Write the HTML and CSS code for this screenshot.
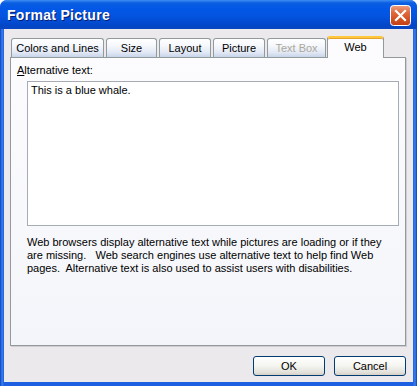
FILE: index.html
```html
<!DOCTYPE html>
<html lang="en">

<head>
    <meta charset="UTF-8">
    <meta name="viewport" content="width=device-width, initial-scale=1.0">
    <title>Format Picture</title>
    <link rel="stylesheet" href="styles.css">
</head>

<body>
    <div class="window">
        <div class="titlebar">
            <span class="title">Format Picture</span>
            <svg class="close" width="21" height="21" viewBox="0 0 21 21">
                <defs>
                    <linearGradient id="closeFill" x1="0" y1="0" x2="0" y2="1">
                        <stop offset="0" stop-color="#eba083" />
                        <stop offset="0.35" stop-color="#e06a3e" />
                        <stop offset="0.7" stop-color="#d2501f" />
                        <stop offset="1" stop-color="#c0401a" />
                    </linearGradient>
                </defs>
                <rect x="0.5" y="0.5" width="20" height="20" rx="3" fill="url(#closeFill)" stroke="#ffffff" />
                <path d="M6 6 L15 15 M15 6 L6 15" stroke="#ffffff" stroke-width="2.2" stroke-linecap="square" />
            </svg>
        </div>

        <div class="dialog">
            <div class="tabs">
                <div class="tab tab-colors">Colors and Lines</div>
                <div class="tab tab-size">Size</div>
                <div class="tab tab-layout">Layout</div>
                <div class="tab tab-picture">Picture</div>
                <div class="tab tab-textbox disabled">Text Box</div>
                <div class="tab tab-web active">Web</div>
            </div>

            <div class="panel">
                <label class="field-label" for="altText"><u>A</u>lternative text:</label>
                <textarea id="altText" class="alt-text">This is a blue whale.</textarea>
                <p class="help">Web browsers display alternative text while pictures are loading or if they<br>are missing.   Web search engines use alternative text to help find Web<br>pages.  Alternative text is also used to assist users with disabilities.</p>
            </div>

            <div class="buttons">
                <button class="btn">OK</button>
                <button class="btn">Cancel</button>
            </div>
        </div>
    </div>
</body>

</html>
```

FILE: styles.css
```css
body {
    margin: 0;
    padding: 0;
    background: #ffffff;
    font-family: "Liberation Sans", Arial, sans-serif;
    font-size: 11px;
    color: #000000;
}

.window {
    width: 417px;
    height: 386px;
    box-sizing: border-box;
    border-radius: 7px 7px 0 0;
    padding: 0 4px 4px 4px;
    display: flex;
    flex-direction: column;
    background: linear-gradient(to right, #0a3fb8 0, #3a80f0 2px, #1c5fe0 4px, #1c5fe0 413px, #3a80f0 415px, #0a3fb8 417px);
}

.titlebar {
    height: 29px;
    margin: 0 -4px;
    padding: 0 6px 0 7px;
    display: flex;
    align-items: center;
    justify-content: space-between;
    border-radius: 7px 7px 0 0;
    background: linear-gradient(to bottom, #3e8df3 0, #0a5ee0 3px, #0358e6 8px, #0354e0 16px, #0247c9 25px, #0a45bf 29px);
}

.title {
    color: #ffffff;
    font-weight: bold;
    font-size: 14px;
    letter-spacing: 0.3px;
    margin-top: 1px;
    text-shadow: 1px 1px 0 #0a1e6e;
}

.close {
    display: block;
    margin-top: 1px;
}

.dialog {
    flex: 1;
    background: #ece9ec;
    padding: 7px 7px 0 6px;
    display: flex;
    flex-direction: column;
}

.tabs {
    display: flex;
    align-items: flex-end;
    height: 22px;
    padding-left: 1px;
    position: relative;
    z-index: 1;
}

.tab {
    height: 19px;
    box-sizing: border-box;
    margin-right: 2px;
    border: 1px solid #919b9c;
    border-bottom: none;
    border-radius: 3px 3px 0 0;
    background: linear-gradient(to bottom, #ffffff 0, #f6f8fc 35%, #e2e9f5 75%, #c8d4ea 100%);
    display: flex;
    align-items: center;
    justify-content: center;
    margin-bottom: 1px;
}

.tab-colors { width: 93px; }
.tab-size { width: 51px; }
.tab-layout { width: 52px; }
.tab-picture { width: 52px; }
.tab-textbox { width: 59px; }

.tab.disabled {
    color: #aca899;
}

.tab.active {
    width: 57px;
    height: 22px;
    margin: 0 0 0 -1px;
    border-top: 2px solid #ffc73c;
    border-radius: 3px 3px 0 0;
    background: #fcfcfe;
    box-shadow: inset 0 1px 0 #e6a32d;
    padding-bottom: 3px;
}

.panel {
    height: 289px;
    box-sizing: border-box;
    margin-top: -1px;
    border: 1px solid #919b9c;
    background: linear-gradient(to bottom, #fcfcfe, #f4f5fa);
    padding: 6px 6px 0 6px;
    box-shadow: 1px 1px 0 #d0cdd2;
}

.field-label {
    display: block;
    height: 17px;
    line-height: 13px;
}

.alt-text {
    display: block;
    width: 372px;
    height: 145px;
    box-sizing: border-box;
    margin-left: 10px;
    padding: 2px 3px;
    border: 1px solid #a5acb5;
    background: #ffffff;
    font-family: inherit;
    font-size: 11px;
    line-height: 13px;
    resize: none;
}

.help {
    margin: 10px 0 0 10px;
    line-height: 13px;
    white-space: pre-wrap;
}

.buttons {
    display: flex;
    justify-content: flex-end;
    gap: 9px;
    padding-top: 10px;
}

.btn {
    width: 72px;
    height: 20px;
    padding: 0;
    border: 1px solid #003c74;
    border-radius: 3px;
    background: linear-gradient(to bottom, #ffffff 0, #f4f4f0 50%, #e2e1da 85%, #d6d0c5 100%);
    font-family: inherit;
    font-size: 11px;
    color: #000000;
}
```
